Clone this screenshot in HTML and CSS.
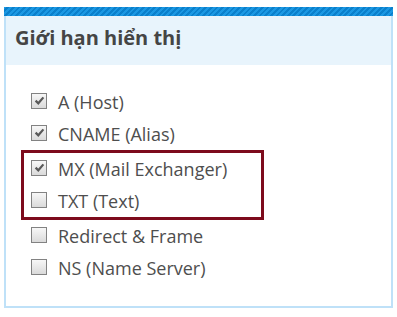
FILE: index.html
```html
<!DOCTYPE html>
<html lang="vi">
<head>
  <meta charset="UTF-8">
  <title>Giới hạn hiển thị</title>
  <link rel="stylesheet" href="styles.css">
</head>
<body>

<div class="panel">
  <div class="panel-bar"></div>
  <div class="panel-head">Giới hạn hiển thị</div>
  <div class="panel-body">
    <label class="row"><span class="box"><svg viewBox="0 0 13 13"><path d="M2.6 6.6 L5.3 9.3 L10.4 3.4" /></svg></span>A (Host)</label>
    <label class="row"><span class="box"><svg viewBox="0 0 13 13"><path d="M2.6 6.6 L5.3 9.3 L10.4 3.4" /></svg></span>CNAME (Alias)</label>
    <div class="mark">
      <label class="row"><span class="box"><svg viewBox="0 0 13 13"><path d="M2.6 6.6 L5.3 9.3 L10.4 3.4" /></svg></span>MX (Mail Exchanger)</label>
      <label class="row"><span class="box"></span>TXT (Text)</label>
    </div>
    <label class="row"><span class="box"></span>Redirect &amp; Frame</label>
    <label class="row"><span class="box"></span>NS (Name Server)</label>
  </div>
</div>

</body>
</html>
```

FILE: styles.css
```css
* {
  box-sizing: border-box;
}
body {
  margin: 0;
  background: #fff;
  font-family: "Open Sans", "Noto Sans", sans-serif;
}

.panel {
  margin: 7px 4px 0 4px;
  width: 389px;
  border: 2px solid #bfe1f8;
  border-top: 0;
}

.panel-bar {
  height: 9px;
  margin: 0 -2px;
  background: repeating-linear-gradient(135deg, #1b98e3 0 2px, #0a80cc 2px 4px);
}

.panel-head {
  height: 49px;
  background: #e8f4fc;
  padding: 8px 0 0 9px;
  font-size: 20px;
  font-weight: bold;
  color: #454545;
}

.panel-body {
  padding: 21px 0 22px 25px;
}

.row {
  display: flex;
  align-items: center;
  height: 32px;
  font-size: 18px;
  color: #4e4e4e;
}

.box {
  flex: none;
  width: 16px;
  height: 16px;
  border: 1px solid #828282;
  background: linear-gradient(#f7f7f7, #dadada);
  margin: 0 11px 3px 0;
  display: flex;
  align-items: center;
  justify-content: center;
}

.box svg {
  width: 13px;
  height: 13px;
  fill: none;
  stroke: #585858;
  stroke-width: 2.2;
}

.mark {
  width: 243px;
  margin-left: -10px;
  padding-left: 7px;
  border: 3px solid #7d0b1c;
}
```
